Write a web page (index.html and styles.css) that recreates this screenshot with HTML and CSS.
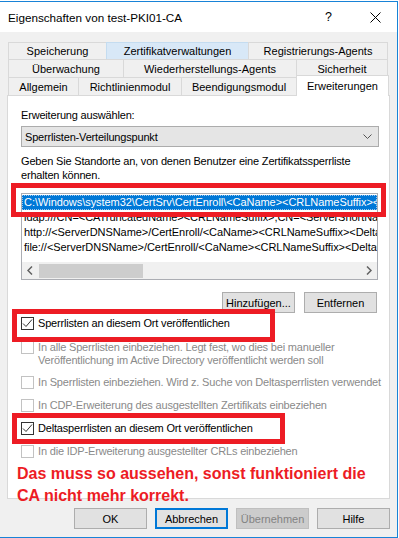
FILE: index.html
```html
<!DOCTYPE html>
<html lang="de">
<head>
  <meta charset="UTF-8">
  <title>Eigenschaften von test-PKI01-CA</title>
  <link rel="stylesheet" href="styles.css">
</head>
<body>
  <div class="window">
    <div class="titlebar">
      <span class="title">Eigenschaften von test-PKI01-CA</span>
      <span class="help">?</span>
      <svg class="close" width="11" height="11" viewBox="0 0 11 11"><path d="M0.5 0.5 L10.5 10.5 M10.5 0.5 L0.5 10.5" stroke="#000" stroke-width="1"/></svg>
    </div>

    <div class="client">
      <div class="tabs">
        <div class="tab-row">
          <div class="tab w99">Speicherung</div>
          <div class="tab hover w143">Zertifikatverwaltungen</div>
          <div class="tab w140">Registrierungs-Agents</div>
        </div>
        <div class="tab-row">
          <div class="tab w116">Überwachung</div>
          <div class="tab w174">Wiederherstellungs-Agents</div>
          <div class="tab w92">Sicherheit</div>
        </div>
        <div class="tab-row">
          <div class="tab w71">Allgemein</div>
          <div class="tab w104">Richtlinienmodul</div>
          <div class="tab w116">Beendigungsmodul</div>
          <div class="tab active">Erweiterungen</div>
        </div>
      </div>

      <div class="panel">
        <div class="label">Erweiterung auswählen:</div>
        <div class="combo">
          <span>Sperrlisten-Verteilungspunkt</span>
          <svg width="9" height="5" viewBox="0 0 9 5"><polyline points="0.5,0.5 4.5,4.5 8.5,0.5" fill="none" stroke="#555" stroke-width="1"/></svg>
        </div>
        <p class="desc">Geben Sie Standorte an, von denen Benutzer eine Zertifikatssperrliste erhalten können.</p>

        <div class="listbox">
          <div class="items">
            <div class="item selected">C:\Windows\system32\CertSrv\CertEnroll\&lt;CaName&gt;&lt;CRLNameSuffix&gt;&lt;DeltaCRLAllowed&gt;.crl</div>
            <div class="item">ldap:///CN=&lt;CATruncatedName&gt;&lt;CRLNameSuffix&gt;,CN=&lt;ServerShortName&gt;,CN=CDP,CN=Public Key Services</div>
            <div class="item">http://&lt;ServerDNSName&gt;/CertEnroll/&lt;CaName&gt;&lt;CRLNameSuffix&gt;&lt;DeltaCRLAllowed&gt;.crl</div>
            <div class="item">file://&lt;ServerDNSName&gt;/CertEnroll/&lt;CaName&gt;&lt;CRLNameSuffix&gt;&lt;DeltaCRLAllowed&gt;.crl</div>
          </div>
          <div class="hscroll">
            <svg class="arrow" width="6" height="9" viewBox="0 0 6 9"><polyline points="5,0.5 1,4.5 5,8.5" fill="none" stroke="#606060" stroke-width="1.5"/></svg>
            <div class="track"><div class="thumb"></div></div>
            <svg class="arrow" width="6" height="9" viewBox="0 0 6 9"><polyline points="1,0.5 5,4.5 1,8.5" fill="none" stroke="#606060" stroke-width="1.5"/></svg>
          </div>
        </div>

        <div class="list-buttons">
          <button class="btn">Hinzufügen...</button>
          <button class="btn">Entfernen</button>
        </div>

        <div class="checks">
          <label class="check"><span class="box checked"><svg width="11" height="11" viewBox="0 0 11 11"><polyline points="1,5.5 4,8.5 10,1.5" fill="none" stroke="#333" stroke-width="1"/></svg></span><span>Sperrlisten an diesem Ort veröffentlichen</span></label>
          <label class="check disabled two"><span class="box"></span><span>In alle Sperrlisten einbeziehen. Legt fest, wo dies bei manueller<br>Veröffentlichung im Active Directory veröffentlicht werden soll</span></label>
          <label class="check disabled"><span class="box"></span><span>In Sperrlisten einbeziehen. Wird z. Suche von Deltasperrlisten verwendet</span></label>
          <label class="check disabled"><span class="box"></span><span>In CDP-Erweiterung des ausgestellten Zertifikats einbeziehen</span></label>
          <label class="check"><span class="box checked"><svg width="11" height="11" viewBox="0 0 11 11"><polyline points="1,5.5 4,8.5 10,1.5" fill="none" stroke="#333" stroke-width="1"/></svg></span><span>Deltasperrlisten an diesem Ort veröffentlichen</span></label>
          <label class="check disabled"><span class="box"></span><span>In die IDP-Erweiterung ausgestellter CRLs einbeziehen</span></label>
        </div>
      </div>

      <div class="dialog-buttons">
        <button class="btn">OK</button>
        <button class="btn default">Abbrechen</button>
        <button class="btn off">Übernehmen</button>
        <button class="btn">Hilfe</button>
      </div>
    </div>

    <!-- annotations drawn over the screenshot -->
    <div class="mark mark-list"></div>
    <div class="mark mark-crl"></div>
    <div class="mark mark-delta"></div>
    <p class="note">Das muss so aussehen, sonst funktioniert die<br>CA nicht mehr korrekt.</p>
  </div>
</body>
</html>
```

FILE: styles.css
```css
* { margin: 0; padding: 0; box-sizing: border-box; }
body { background: #fff; width: 399px; height: 538px; overflow: hidden; font-family: "Liberation Sans", Arial, sans-serif; font-size: 11px; color: #000; }

.window { position: relative; margin-top: 1px; width: 398px; height: 537px; background: #f0f0f0; border-top: 1px solid #1883d7; border-right: 1px solid #1883d7; border-bottom: 1px solid #1883d7; }

.titlebar { height: 30px; background: #fff; display: flex; align-items: center; padding-left: 8px; }
.title { flex: 1; font-size: 11.7px; }
.help { font-size: 12.5px; margin-right: 38px; }
.close { margin-right: 16px; }

.client { padding-top: 10px; }

/* tabs */
.tabs { margin-left: 8px; }
.tab-row { display: flex; height: 19px; margin-top: -1px; }
.tab-row:first-child { height: 18px; margin-top: 0; }
.tab { height: 100%; border: 1px solid #d9d9d9; margin-left: -1px; background: #f0f0f0; display: flex; align-items: center; justify-content: center; white-space: nowrap; }
.tab:first-child { margin-left: 0; }
.tab.hover { background: #d8e8f7; border-color: #c4dcf0; }
.tab.active { position: relative; z-index: 2; width: 93px; height: 21px; margin-top: -2px; background: #fff; border-bottom: none; padding-bottom: 1px; }
.w71 { width: 71px; } .w92 { width: 92px; } .w99 { width: 99px; } .w104 { width: 104px; }
.w116 { width: 116px; } .w140 { width: 140px; } .w143 { width: 143px; } .w174 { width: 174px; }

/* property page */
.panel { margin: -1px 0 0 7px; width: 383px; height: 404px; background: #fff; border: 1px solid #d9d9d9; padding: 12px 11px 0 13px; letter-spacing: -0.18px; }
.label { line-height: 15px; }
.combo { margin-top: 3px; width: 358px; height: 21px; background: #e5e5e5; border: 1px solid #acacac; display: flex; align-items: center; justify-content: space-between; padding: 0 6px 0 3px; }
.desc { margin-top: 7px; line-height: 14px; width: 358px; }

.listbox { margin-top: 11px; width: 357px; height: 87px; border: 1px solid #abadb3; display: flex; flex-direction: column; }
.items { flex: 1; overflow: hidden; padding-top: 1px; letter-spacing: -0.05px; }
.item { line-height: 15px; white-space: nowrap; padding-left: 2px; }
.item.selected { background: #0078d7; color: #fff; outline: 1px dotted #9cc8ee; outline-offset: -1px; }
.hscroll { height: 17px; background: #f0f0f0; display: flex; align-items: center; }
.hscroll .arrow { margin: 0 6px 0 5px; }
.hscroll .arrow:last-child { margin: 0 5px 0 6px; }
.track { flex: 1; height: 100%; display: flex; align-items: center; }
.thumb { width: 104px; height: 14px; background: #cdcdcd; }

.list-buttons { display: flex; justify-content: flex-end; gap: 9px; margin-top: 12px; padding-right: 1px; }
.btn { width: 73px; height: 21px; background: #e1e1e1; border: 1px solid #adadad; font-family: inherit; font-size: 11px; color: #000; }
.btn.default { border: 2px solid #0078d7; }
.btn.off { background: #cccccc; border-color: #bfbfbf; color: #838383; }

.checks { display: flex; flex-direction: column; gap: 8px; margin-top: 3px; }
.check { display: flex; align-items: flex-start; gap: 4px; line-height: 15px; white-space: nowrap; }
.check.disabled { color: #8a8a8a; }
.check.two { line-height: 13px; margin-top: 2px; }
.box { flex: none; width: 13px; height: 13px; margin-top: 1px; border: 1px solid #c2c2c2; background: #fff; display: flex; align-items: center; justify-content: center; }
.check.two .box { margin-top: 0; }
.box.checked { border-color: #333; }

.dialog-buttons { display: flex; justify-content: flex-end; gap: 8px; margin-top: 9px; padding-right: 7px; }

/* red annotations */
.mark { position: absolute; border: 5px solid #ed1c24; }
.mark-list { left: 11px; top: 181px; width: 375px; height: 34px; }
.mark-crl { left: 12px; top: 307px; width: 263px; height: 33px; }
.mark-delta { left: 12px; top: 411px; width: 273px; height: 31px; }
.note { position: absolute; left: 17px; top: 461px; font-size: 16px; font-weight: bold; line-height: 22px; color: #ed1c24; white-space: nowrap; }
```
